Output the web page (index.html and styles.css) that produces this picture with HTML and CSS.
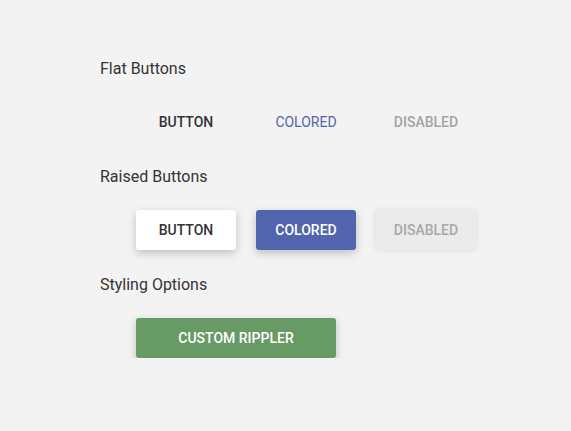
FILE: index.html
```html
<!DOCTYPE html>
<html>
<head>
<meta charset="utf-8">
<link rel="stylesheet" href="styles.css">
</head>
<body>
<div class="page">
  <h2 class="heading">Flat Buttons</h2>
  <div class="row">
    <button class="btn flat">BUTTON</button>
    <button class="btn flat colored">COLORED</button>
    <button class="btn flat disabled">DISABLED</button>
  </div>
  <h2 class="heading">Raised Buttons</h2>
  <div class="row">
    <button class="btn raised">BUTTON</button>
    <button class="btn raised colored">COLORED</button>
    <button class="btn raised disabled">DISABLED</button>
  </div>
  <h2 class="heading">Styling Options</h2>
  <div class="row">
    <button class="btn raised rippler">CUSTOM RIPPLER</button>
  </div>
</div>
</body>
</html>
```
FILE: styles.css
```css
html, body {
  margin: 0;
  padding: 0;
  background: #f3f3f3;
}
.page {
  padding: 58px 0 0 100px;
  display: flex;
  flex-direction: column;
  gap: 24px;
  font-family: Roboto, "Liberation Sans", sans-serif;
}
.heading {
  margin: 0;
  font-size: 16px;
  line-height: 20px;
  padding-top: 1px;
  margin-bottom: -1px;
  font-weight: 400;
  color: #333;
}
.row {
  display: flex;
  gap: 20px;
  padding-left: 36px;
}
.btn {
  width: 100px;
  height: 40px;
  border: none;
  border-radius: 3px;
  font-family: Roboto, "Liberation Sans", sans-serif;
  font-size: 14px;
  font-weight: 500;
  color: #333;
  background: transparent;
  padding: 0;
}
.flat.colored { color: #5264ae; font-weight: 400; }
.flat.disabled { color: #a3a3a3; }
.raised {
  background: #fff;
  box-shadow: 0 3px 8px rgba(0,0,0,0.22);
}
.raised.colored {
  background: #5264ae;
  color: #fff;
}
.raised.disabled {
  background: #ebebeb;
  color: #a8a8a8;
  box-shadow: 0 0 6px rgba(0,0,0,0.10);
}
.raised.rippler {
  width: 200px;
  background: #689a66;
  color: #fff;
}
```
